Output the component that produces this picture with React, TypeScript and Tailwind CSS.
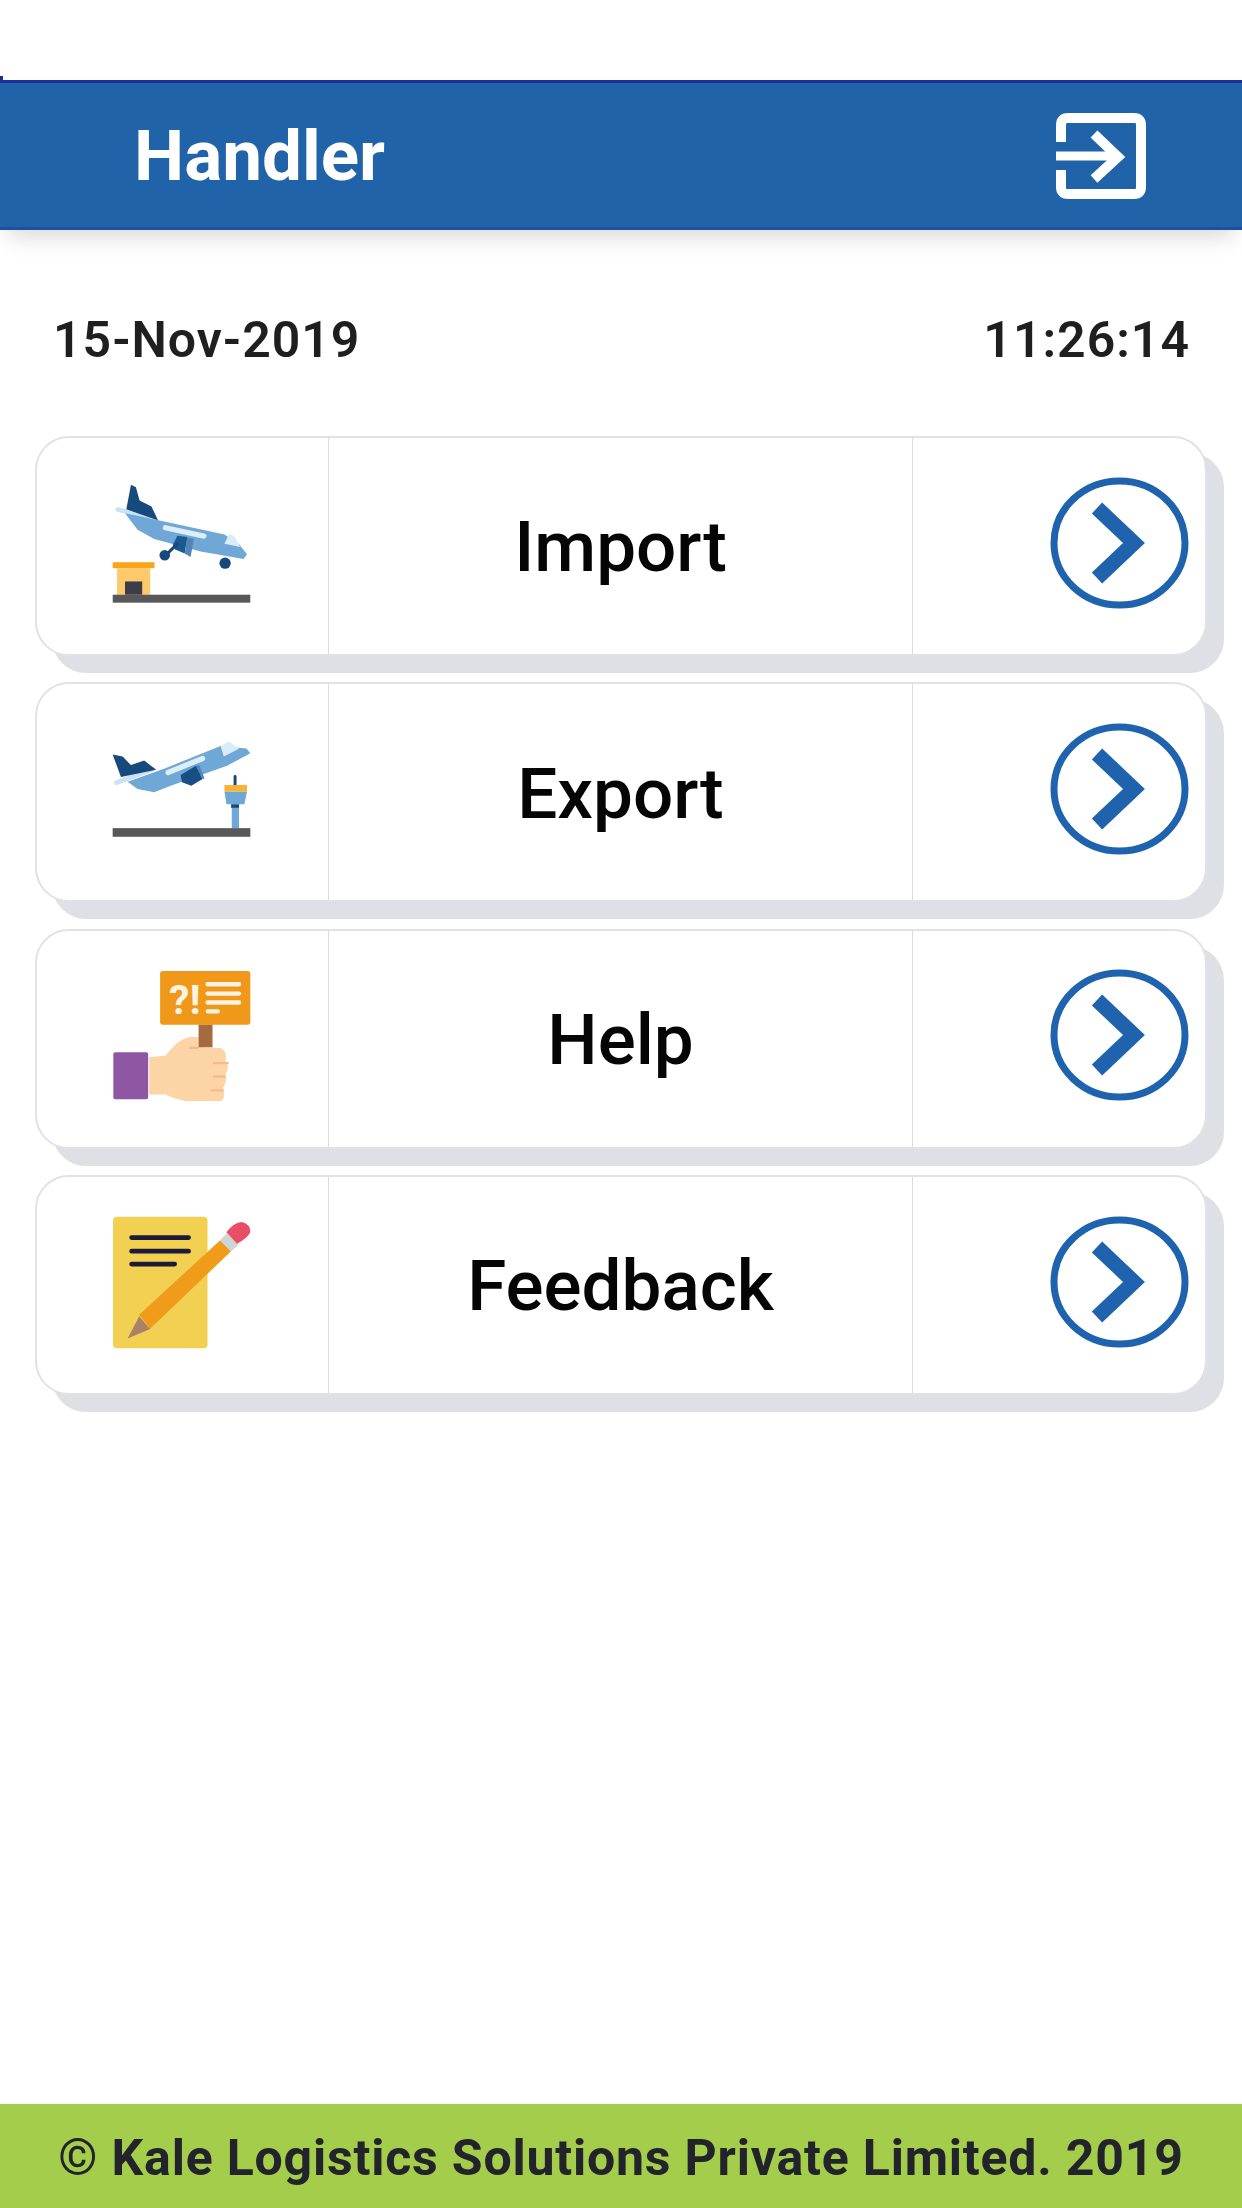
const MENU_ITEMS = [
  { label: "Import", icon: <ImportIcon /> },
  { label: "Export", icon: <ExportIcon /> },
  { label: "Help", icon: <HelpIcon /> },
  { label: "Feedback", icon: <FeedbackIcon /> },
];

function ImportIcon() {
  return (
    <svg width="139" height="119" viewBox="273 188 419 359">
      <path d="M290 265 L382 287" stroke="#c9e3f6" strokeWidth="14" strokeLinecap="round" fill="none" />
      <path d="M330 190 L345 198 L356 238 L392 256 L412 298 L316 264 Z" fill="#174a7c" />
      <path d="M312 276 L350 284 L612 340 L655 368 L680 400 L670 414 L540 392 L400 354 L350 326 Z" fill="#6fa8d6" />
      <path d="M612 368 L626 338 L642 346 L660 378 Z" fill="#d8ecf9" />
      <path d="M434 320 L550 345" stroke="#dbeefa" strokeWidth="16" strokeLinecap="round" fill="none" />
      <path d="M470 344 L500 348 L492 398 L462 385 L456 372 Z" fill="#1a5a8f" />
      <path d="M500 350 L520 354 L510 408 L492 398 Z" fill="#4f86b5" />
      <path d="M440 398 L472 366" stroke="#174a7c" strokeWidth="9" />
      <circle cx="432" cy="403" r="16" fill="#174a7c" />
      <circle cx="614" cy="427" r="17" fill="#174a7c" />
      <rect x="275" y="424" width="126" height="18" fill="#f9a61a" />
      <rect x="288" y="442" width="100" height="80" fill="#fdc96b" />
      <rect x="312" y="482" width="52" height="40" fill="#3e3b4a" />
      <rect x="275" y="522" width="415" height="24" fill="#58585a" />
    </svg>
  );
}

function ExportIcon() {
  return (
    <svg width="139" height="97" viewBox="273 183 419 289">
      <path d="M286 307 L396 266" stroke="#c9e3f6" strokeWidth="14" strokeLinecap="round" fill="none" />
      <path d="M275 222 L305 228 L330 254 L370 240 L406 268 L300 290 Z" fill="#174a7c" />
      <path d="M320 304 L430 265 L600 196 L678 204 L690 218 L620 256 L450 316 L400 336 L350 326 Z" fill="#6fa8d6" />
      <path d="M600 196 L626 183 L656 205 L610 228 Z" fill="#d8ecf9" />
      <path d="M442 276 L546 234" stroke="#dbeefa" strokeWidth="16" strokeLinecap="round" fill="none" />
      <path d="M480 284 L526 256 L546 296 L512 316 L484 306 Z" fill="#174f85" />
      <path d="M526 256 L536 254 L552 294 L546 296 Z" fill="#4f86b5" />
      <path d="M644 288 L644 315" stroke="#174a7c" strokeWidth="9" strokeLinecap="round" />
      <rect x="612" y="314" width="68" height="20" fill="#f9b233" />
      <path d="M612 334 L680 334 L672 372 L618 372 Z" fill="#6fa8d6" />
      <rect x="632" y="372" width="24" height="11" fill="#174a7c" />
      <rect x="634" y="383" width="22" height="62" fill="#6fa8d6" />
      <rect x="275" y="444" width="415" height="26" fill="#58585a" />
    </svg>
  );
}

function HelpIcon() {
  return (
    <svg width="139" height="131" viewBox="273 148 419 393">
      <rect x="418" y="150" width="272" height="162" rx="8" fill="#f09819" />
      <text x="445" y="280" fontFamily="Roboto, sans-serif" fontWeight="700" fontSize="124" fill="#fdf3e2">?!</text>
      <path d="M561 190 H656 M561 218 H656 M561 245 H656" stroke="#fdf3e2" strokeWidth="13" strokeLinecap="round" />
      <path d="M562 272 H592" stroke="#fdf3e2" strokeWidth="13" strokeLinecap="round" />
      <path d="M385 410 L435 405 Q470 355 510 348 L534 350 L534 380 L600 382 Q622 392 615 422 Q630 440 615 462 Q622 482 608 502 Q618 532 600 543 L500 543 Q460 535 435 522 L385 522 Z" fill="#fdd4a6" />
      <path d="M580 428 H622 M580 468 H612 M572 510 H606 M508 382 H532" stroke="#efbd90" strokeWidth="7" strokeLinecap="round" />
      <rect x="534" y="312" width="42" height="68" fill="#a66a3f" />
      <rect x="277" y="395" width="105" height="142" rx="6" fill="#8f56a4" />
    </svg>
  );
}

function FeedbackIcon() {
  return (
    <svg width="139" height="133" viewBox="273 166 419 401">
      <rect x="276" y="168" width="285" height="397" rx="12" fill="#f2d052" />
      <path d="M332 231 H504 M332 272 H504 M332 311 H462" stroke="#1d1a3a" strokeWidth="14" strokeLinecap="round" />
      <path d="M355 464 L600 238 L632 272 L388 506 Z" fill="#f09c1a" />
      <path d="M320 535 L355 468 L388 507 Z" fill="#a98268" />
      <path d="M598 240 L620 218 L655 252 L632 272 Z" fill="#ccd6d6" />
      <path d="M618 215 Q640 185 665 184 Q690 190 690 215 Q682 232 650 250 Z" fill="#e84e66" />
    </svg>
  );
}

function ExitIcon() {
  return (
    <svg className="mt-[2px]" width="90" height="86" viewBox="0 0 90 86" fill="none" stroke="#ffffff">
      <path d="M5 29 V12 Q5 5 12 5 H78 Q85 5 85 12 V74 Q85 81 78 81 H12 Q5 81 5 74 V57" strokeWidth="10" />
      <path d="M0 43 H60" strokeWidth="9" />
      <path d="M38 21 L62 44 L38 66" strokeWidth="10" />
    </svg>
  );
}

function MenuRow({ label, icon }: { label: string; icon: React.ReactNode }) {
  return (
    <div className="relative h-[220px] w-[1172px]">
      <div className="absolute left-[17px] top-[17px] h-full w-full rounded-[34px] bg-[#dfdfe6]" />
      <div className="relative flex h-full w-full rounded-[34px] border-2 border-[#e2e2e6] bg-white">
        <div className="flex w-[291px] items-center pb-[6px] pl-[75px]">{icon}</div>
        <div className="flex flex-1 items-center justify-center border-x border-[#dcdce0] pt-[3px] text-[71px] font-medium text-[#050505]">
          {label}
        </div>
        <div className="flex w-[292px] items-center justify-end pb-[7px] pr-[16px]">
          <svg width="140" height="134" viewBox="0 0 140 134" fill="none" stroke="#1f63ae">
            <ellipse cx="70.5" cy="67" rx="65.5" ry="62" strokeWidth="7" />
            <path d="M48 32 L85 67 L48 102" strokeWidth="15" />
          </svg>
        </div>
      </div>
    </div>
  );
}

export default function App() {
  return (
    <div className="flex h-[2208px] w-[1242px] flex-col overflow-hidden bg-white font-['Roboto',sans-serif]">
      <div className="relative h-[80px] shrink-0">
        <div className="absolute bottom-0 left-0 h-[4px] w-[3px] bg-[#1c2f96]" />
      </div>

      <header className="relative flex h-[150px] shrink-0 items-center justify-between border-y-[3px] border-t-[#1c2f96] border-b-[#1f4f9e] bg-[#2063a8] pl-[134px] pr-[96px] shadow-[0_14px_22px_-8px_rgba(0,0,0,0.16)]">
        <span className="pt-[2px] text-[71px] font-bold text-white">Handler</span>
        <ExitIcon />
      </header>

      <div className="flex items-center justify-between pl-[53px] pr-[52px] pt-[79px] text-[50px] font-semibold leading-[62px] tracking-[1px] text-[#1f1f1f]">
        <span>15-Nov-2019</span>
        <span>11:26:14</span>
      </div>

      <main className="flex flex-col gap-[26.4px] pl-[35px] pt-[65px]">
        {MENU_ITEMS.map((item) => (
          <MenuRow key={item.label} label={item.label} icon={item.icon} />
        ))}
      </main>

      <footer className="mt-auto flex h-[104px] shrink-0 items-center justify-center bg-[#a4cd4b] pt-[4px] text-[50px] font-bold tracking-[0.8px] text-[#23232b]">
        © Kale Logistics Solutions Private Limited. 2019
      </footer>
    </div>
  );
}
